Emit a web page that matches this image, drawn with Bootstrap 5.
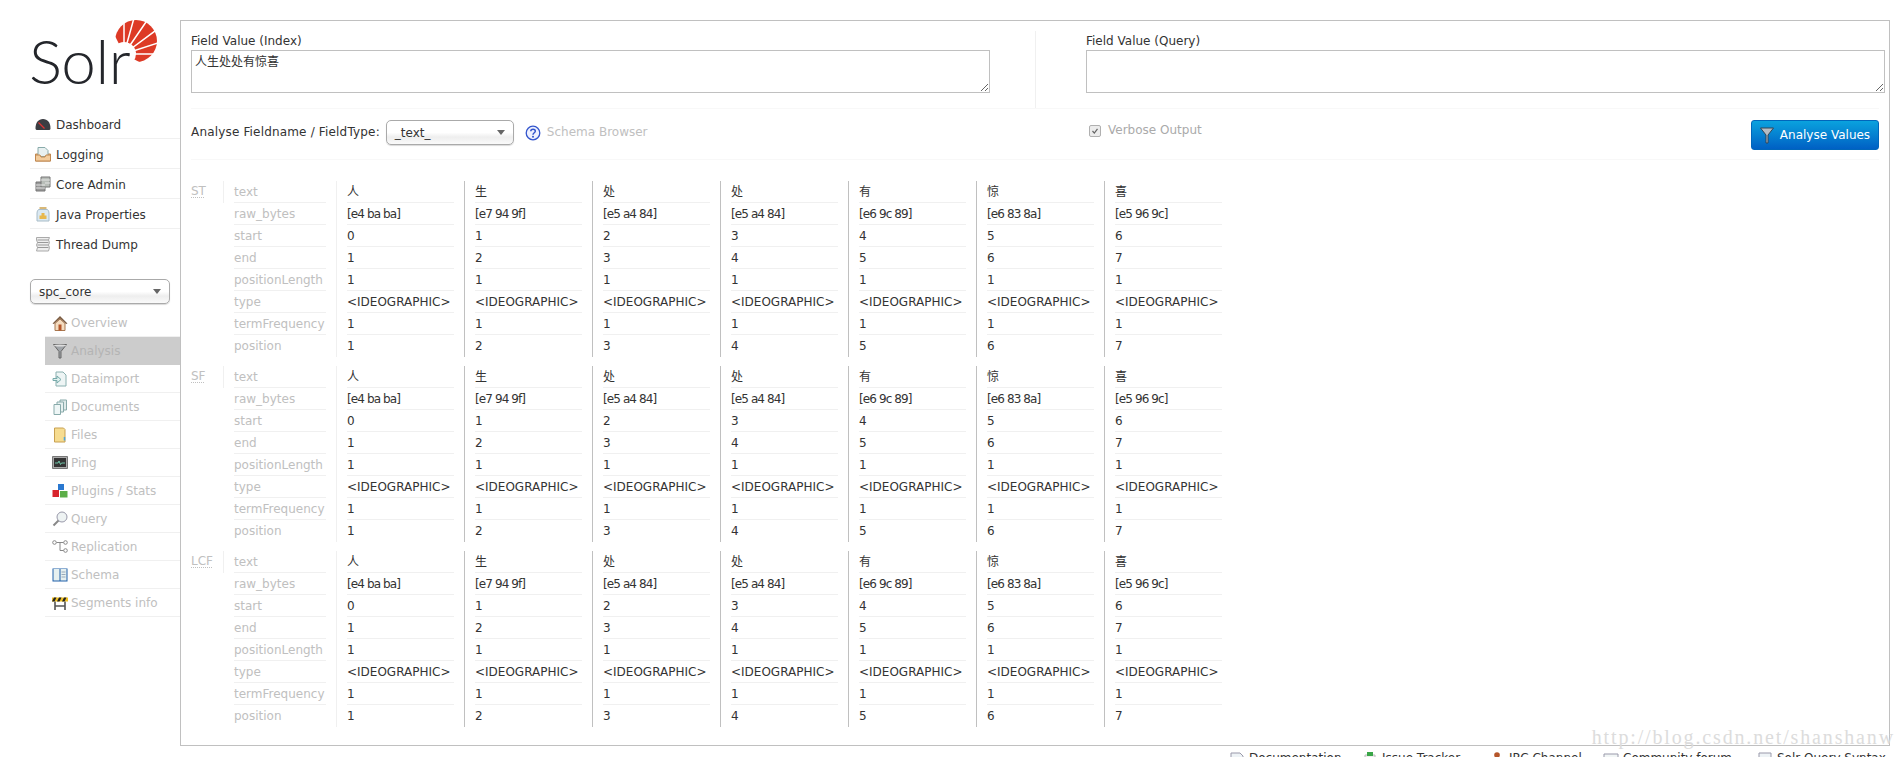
<!DOCTYPE html>
<html lang="en">
<head>
<meta charset="utf-8">
<title>Solr Admin</title>
<link href="https://cdn.jsdelivr.net/npm/bootstrap@5.3.0/dist/css/bootstrap.min.css" rel="stylesheet">
<style>
html,body{height:757px;overflow:hidden;background:#fff}
body{font-family:"DejaVu Sans","Noto Sans CJK SC",sans-serif;font-size:12px;line-height:15px;color:#333}
.sr-shell{width:1898px}
.sr-side{width:180px;flex:none}
.sr-logo{height:109px;position:relative}
.sr-word{font-family:Lato,sans-serif;font-weight:300;font-size:62px;line-height:60px;letter-spacing:-.5px;color:#24262b;position:absolute;left:29px;top:30px}
.sr-sun{position:absolute;left:115px;top:20px}
.sr-nav{margin-left:30px}
.sr-nav a,.sr-core a{display:flex;align-items:center;text-decoration:none;border-bottom:1px solid #f0f0f0}
.sr-nav a{height:30px;color:#333;padding-left:5px;gap:5px}
.sr-nav a span{padding-top:3px}
.sr-nav a:last-child{border-bottom:0}
.sr-nav svg,.sr-core svg{width:16px;height:16px;flex:none}
.sr-pick{display:flex;align-items:center;justify-content:space-between;height:25px;border:1px solid #aaa;border-radius:5px;background:linear-gradient(#fff 50%,#eee 70%,#fafafa);box-shadow:0 1px 1px rgba(0,0,0,.15);color:#333;font-size:12px;padding:0 8px;width:100%}
.sr-pick:hover{background:linear-gradient(#fff 50%,#eee 70%,#fafafa);color:#333;border-color:#aaa}
.sr-caret{width:0;height:0;border:4px solid transparent;border-top:5px solid #666;border-bottom:0}
.sr-pickwrap{margin:20px 10px 5px 30px}
.sr-core{margin-left:45px}
.sr-core a{height:28px;color:#c0c0c0;padding-left:7px;gap:3px}
.sr-core a span{padding-top:1px}
.sr-core a.sr-on{background:#ccc;color:#b4b4b4;border-bottom-color:#ccc}
.sr-main{width:1710px;height:726px;margin-top:20px;border:1px solid #c0c0c0;padding:10px 10px 0;flex:none;position:relative}
.sr-fields{height:78px;border-bottom:1px solid #f8f8f8;width:1688px}
.sr-fcol{width:845px;border-right:1px solid #f0f0f0;flex:none}
.sr-fcol2{padding-left:50px;width:843px;flex:none}
.sr-lab{display:block;height:19px;line-height:17px;margin:0;padding-top:2px;color:#333}
.sr-area.form-control{width:799px;height:43px;border:1px solid #c0c0c0;border-radius:0;padding:4px 2px 0 3px;font-family:"DejaVu Sans","Noto Sans CJK SC",sans-serif;font-size:12px;line-height:15px;color:#333;box-shadow:none;resize:both;min-height:0}
.sr-opts{height:51px;border-bottom:1px solid #f8f8f8;width:1688px;position:relative}
.sr-opt1{width:895px;flex:none;padding-top:11px;gap:6px;align-items:center;height:36px}
.sr-ftype{letter-spacing:.17px}
.sr-sel{width:128px;flex:none;margin-right:5px}
.sr-sel .sr-pick{padding:0 8px}
.sr-muted{color:#c0c0c0}
.sr-verb{display:flex;align-items:center;gap:7px;height:25px;margin-top:9px;margin-left:3px;color:#aaa;width:600px}
.sr-verb .form-check-input{width:12px;height:12px;opacity:1;flex:none;border:1px solid #b0b0b0;border-radius:2px;background-color:#ececec;background-size:10px;background-image:url("data:image/svg+xml,%3csvg xmlns='http://www.w3.org/2000/svg' viewBox='0 0 12 12'%3e%3cpath d='M3 6l2.200 2.500L9 3.500' fill='none' stroke='%23666' stroke-width='1.500'/%3e%3c/svg%3e")}
.sr-go.btn{height:30px;width:128px;margin:11px 0 0;padding:0;display:flex;align-items:center;justify-content:center;gap:6px;font-size:12px;color:#fff;border:1px solid #0066bb;border-radius:3px;background:linear-gradient(#0aa2de,#0060c4);margin-left:auto}
.sr-groups{margin-top:21px}
.sr-grp{display:flex;margin-bottom:9px;height:176px}
.sr-code{width:33px;height:22px;flex:none;border-right:1px solid #f0f0f0;color:#c0c0c0;line-height:21px;position:relative}
.sr-code abbr{text-decoration:underline dotted #c0c0c0;text-underline-offset:2px;cursor:help}
.sr-names{width:112px;padding:0 10px;flex:none;color:#c0c0c0}
.sr-tok{width:128px;padding:0 10px;flex:none;border-left:1px solid #c0c0c0;white-space:nowrap}
.sr-tok.sr-first{border-left-color:#f0f0f0}
.sr-row{height:22px;line-height:23px;border-bottom:1px solid #f0f0f0}
.sr-row:last-child{border-bottom:0}
.sr-raw{letter-spacing:-.9px}
.sr-foot{height:20px;padding:6px 0 0;margin-left:1229px;white-space:nowrap}
.sr-foot a{display:flex;flex:none;gap:4px;color:#333;text-decoration:none;align-items:flex-start}
.sr-foot a:nth-child(1){width:133px}
.sr-foot a:nth-child(2){width:127px}
.sr-foot a:nth-child(3){width:114px}
.sr-foot a:nth-child(4){width:154px}
.sr-foot span{margin-top:-1px}
.sr-foot svg{width:16px;height:16px;flex:none}
.sr-mark{position:absolute;right:-6px;top:706px;font-family:"Liberation Serif",serif;font-size:20px;line-height:20px;letter-spacing:1.85px;color:#dcdcdc;white-space:nowrap}
</style>
</head>
<body class="m-0">
<div class="sr-shell">
<div class="d-flex">
<aside class="sr-side">
  <div class="sr-logo">
    <svg class="sr-sun" width="42" height="42" viewBox="0 0 42 42">
      <defs><clipPath id="sunclip"><path d="M9 34 L-2.500 11 A25 25 0 0 1 45 0 L45 40 L30 45 Z"/></clipPath></defs>
      <circle cx="21" cy="21" r="21" fill="#dd3a26" clip-path="url(#sunclip)"/>
      <circle cx="9" cy="34" r="12" fill="#fff"/>
      <g stroke="#fff" stroke-width="1.500">
        <path d="M9 34 9 -2M9 34 19 -2M9 34 31 2M9 34 44 8M9 34 46 22M9 34 46 34"/>
      </g>
    </svg>
    <span class="sr-word">Solr</span>
  </div>
  <nav class="sr-nav nav flex-column">
    <a href="#"><svg viewBox="0 0 16 16"><path d="M.5 12.500C.5 6.500 3.500 3 8 3s7.500 3.500 7.500 9.500c0 1-1 1.500-2 1.500H2.500c-1 0-2-.5-2-1.500Z" fill="#3b3d42"/><path d="M3.500 6.500 9.500 12.500" stroke="#d33" stroke-width="1.300"/></svg><span>Dashboard</span></a>
    <a href="#"><svg viewBox="0 0 16 16"><path d="M.5 8H15.500V15H.5Z" fill="#f0c088" stroke="#c08850"/><path d="M3 1.500H10L13 4.500V10.500H3Z" fill="#e8f0f0" stroke="#8aa"/><path d="M.5 9H5L6 11H10L11 9H15.500V15H.5Z" fill="#f3cc9c" stroke="#c08850"/></svg><span>Logging</span></a>
    <a href="#"><svg viewBox="0 0 16 16"><path d="M1 6H10V15H1Z" fill="#999" stroke="#777"/><path d="M6 1H15V11H6Z" fill="#b8bdb8" stroke="#777"/><path d="M1 9H10M1 12H10M6 4H15M10 7H15" stroke="#e4e4e4"/></svg><span>Core Admin</span></a>
    <a href="#"><svg viewBox="0 0 16 16"><path d="M4.500 1H11.500V3.500H4.500Z" fill="#d8b878"/><path d="M3.500 3.500H12.500Q14 5 14 7V15H2V7Q2 5 3.500 3.500Z" fill="#dbe9f2" stroke="#a8bcc8"/><path d="M6.500 7H9.500V9.500H11.500V13H4.500V9.500H6.500Z" fill="#e8b84c"/></svg><span>Java Properties</span></a>
    <a href="#"><svg viewBox="0 0 16 16"><path d="M1.500 1.500H14.500L13.500 4 14.500 6.500 13.500 9 14.500 11.500 13.500 15H1.500L2.500 11.500 1.500 9 2.500 6.500 1.500 4Z" fill="#eee" stroke="#aaa"/><path d="M2.500 4H13.500M2.500 6.500H13.500M2.500 9H13.500M2.500 11.500H13.500" stroke="#999"/></svg><span>Thread Dump</span></a>
  </nav>
  <div class="sr-pickwrap"><button type="button" class="btn sr-pick"><span>spc_core</span><i class="sr-caret"></i></button></div>
  <nav class="sr-core nav flex-column">
    <a href="#"><svg viewBox="0 0 16 16"><path d="M8 1 .5 8.500 2 9 8 3.500 14 9 15.500 8.500Z" fill="#7a5a40"/><path d="M3 8.500 8 4 13 8.500V15.500H3Z" fill="#f4dcc0" stroke="#a87850"/><path d="M6.500 9.500H9.500V15.500H6.500Z" fill="#b5562a"/></svg><span>Overview</span></a>
    <a href="#" class="sr-on"><svg viewBox="0 0 16 16"><path d="M1.500 1.500H14.500L9 8.500V15H7V8.500Z" fill="#a0a4a8" stroke="#666"/><ellipse cx="8" cy="2.500" rx="6" ry="1" fill="#ddd"/></svg><span>Analysis</span></a>
    <a href="#"><svg viewBox="0 0 16 16"><path d="M4 1H11L14 4V15H4Z" fill="#eef5f5" stroke="#8ab0b0"/><path d="M1 7.500H5V5L9 8.500 5 12V9.500H1Z" fill="#dff0ee" stroke="#7aa"/></svg><span>Dataimport</span></a>
    <a href="#"><svg viewBox="0 0 16 16"><path d="M8 1H14.500V11H8Z" fill="#dde9e9" stroke="#8aa"/><path d="M5 3H11.500V13H5Z" fill="#e6f0f0" stroke="#8aa"/><path d="M2 5.500H8.500V15.500H2Z" fill="#eef6f6" stroke="#8aa"/></svg><span>Documents</span></a>
    <a href="#"><svg viewBox="0 0 16 16"><path d="M2.500 1H11.500L13 2.500V15H2.500Z" fill="#f6dc90" stroke="#c8a050"/><path d="M12.500 10V13.500" stroke="#4ca6d8" stroke-width="1.500"/></svg><span>Files</span></a>
    <a href="#"><svg viewBox="0 0 16 16"><path d="M.5 1.500H15.500V13.500H.5Z" fill="#aaa" stroke="#777"/><path d="M2 3H14V12H2Z" fill="#333"/><path d="M3 8H6L7 6 8.500 9.500 9.500 8H13" stroke="#6fc4a8" fill="none"/></svg><span>Ping</span></a>
    <a href="#"><svg viewBox="0 0 16 16"><path d="M6 1H12V7H6Z" fill="#2a78d0"/><path d="M.5 7H7V14H.5Z" fill="#d8242c"/><path d="M8 8H15.500V14.500H8Z" fill="#5cae48"/></svg><span>Plugins / Stats</span></a>
    <a href="#"><svg viewBox="0 0 16 16"><circle cx="10" cy="6" r="5" fill="#eef3f3" stroke="#99a"/><path d="M6.500 9.500 1.500 14.500" stroke="#888" stroke-width="2"/></svg><span>Query</span></a>
    <a href="#"><svg viewBox="0 0 16 16" fill="none" stroke="#888"><circle cx="2.500" cy="3.500" r="1.800"/><circle cx="13.500" cy="3.500" r="1.800"/><circle cx="13.500" cy="11.500" r="1.800"/><path d="M4.500 3.500H8V11.500H11.500M8 3.500H11.500"/></svg><span>Replication</span></a>
    <a href="#"><svg viewBox="0 0 16 16"><path d="M.5 1.500H15.500V14.500H.5Z" fill="#1e5fa8"/><path d="M1.500 2H7.500V13.500H1.500ZM8.500 2H14.500V13.500H8.500Z" fill="#e6f0f0"/><path d="M9.500 5H13.500M9.500 7.500H13.500M9.500 10H13.500" stroke="#9ab"/></svg><span>Schema</span></a>
    <a href="#"><svg viewBox="0 0 16 16"><path d="M0 2.500H16V6.500H0Z" fill="#f0c020"/><path d="M2 2.500 0 6.500H2.500L4.500 2.500ZM7 2.500 5 6.500H7.500L9.500 2.500ZM12 2.500 10 6.500H12.500L14.500 2.500Z" fill="#222"/><path d="M3 6.500V15M13 6.500V15M3 11H13" stroke="#555" stroke-width="1.600"/></svg><span>Segments info</span></a>
  </nav>
</aside>
<main class="sr-main">
  <div class="sr-fields d-flex">
    <div class="sr-fcol">
      <label class="sr-lab">Field Value (Index)</label>
      <textarea class="form-control sr-area">人生处处有惊喜</textarea>
    </div>
    <div class="sr-fcol2">
      <label class="sr-lab">Field Value (Query)</label>
      <textarea class="form-control sr-area"></textarea>
    </div>
  </div>
  <div class="sr-opts d-flex">
    <div class="sr-opt1 d-flex">
      <span class="sr-ftype">Analyse Fieldname / FieldType:</span>
      <div class="sr-sel"><button type="button" class="btn sr-pick"><span>_text_</span><i class="sr-caret"></i></button></div>
      <svg width="16" height="16" viewBox="0 0 16 16"><circle cx="8" cy="8" r="6.800" fill="#eef1ff" stroke="#3355cc" stroke-width="1.300"/><path d="M5.800 6.300C5.800 3.700 10.300 3.700 10.300 6.300 10.300 7.800 8 7.800 8 9.800" fill="none" stroke="#3355cc" stroke-width="1.500"/><circle cx="8" cy="11.800" r="1" fill="#3355cc"/></svg>
      <span class="sr-muted">Schema Browser</span>
    </div>
    <div class="sr-verb"><input class="form-check-input m-0" type="checkbox" checked disabled id="verbose"><span>Verbose Output</span></div>
    <button type="button" class="btn sr-go"><svg width="14" height="18" viewBox="0 0 14 18"><path d="M.5 2H13.500L8 9V17H6V9Z" fill="#b5bcc4" stroke="#345"/></svg><span>Analyse Values</span></button>
  </div>
  <div class="sr-groups" id="groups"></div>
  <div class="sr-mark">http://blog.csdn.net/shanshanw</div>
</main>
</div>
<footer class="sr-foot d-flex">
  <a href="#"><svg viewBox="0 0 16 16"><path d="M2 1H11L14 4V15H2Z" fill="#eef3f6" stroke="#99a"/></svg><span>Documentation</span></a>
  <a href="#"><svg viewBox="0 0 16 16"><path d="M3 3H13V15H3Z" fill="#eee" stroke="#bbb"/><path d="M5 0H11V4H5Z" fill="#3aa648"/></svg><span>Issue Tracker</span></a>
  <a href="#"><svg viewBox="0 0 16 16"><circle cx="8" cy="3" r="2.800" fill="#b5562a"/><path d="M3 15 8 5 13 15Z" fill="#e0a070"/></svg><span>IRC Channel</span></a>
  <a href="#"><svg viewBox="0 0 16 16"><path d="M1 2H15V13H1Z" fill="#f2f6f6" stroke="#99a"/></svg><span>Community forum</span></a>
  <a href="#"><svg viewBox="0 0 16 16"><path d="M2 1H14V15H2Z" fill="#eef3f6" stroke="#99a"/></svg><span>Solr Query Syntax</span></a>
</footer>
</div>
<script>
var names=["text","raw_bytes","start","end","positionLength","type","termFrequency","position"];
var toks=[["人","[e4 ba ba]"],["生","[e7 94 9f]"],["处","[e5 a4 84]"],["处","[e5 a4 84]"],["有","[e6 9c 89]"],["惊","[e6 83 8a]"],["喜","[e5 96 9c]"]];
var h="";
["ST","SF","LCF"].forEach(function(c){
  h+='<div class="sr-grp"><div class="sr-code"><abbr>'+c+'</abbr></div><div class="sr-names">';
  names.forEach(function(n){h+='<div class="sr-row">'+n+'</div>'});
  h+='</div>';
  toks.forEach(function(t,i){
    var v=[t[0],t[1],i,i+1,1,"&lt;IDEOGRAPHIC&gt;",1,i+1];
    h+='<div class="sr-tok'+(i?'':' sr-first')+'">';
    v.forEach(function(x,k){h+='<div class="sr-row'+(k==1?' sr-raw':'')+'">'+x+'</div>'});
    h+='</div>';
  });
  h+='</div>';
});
document.getElementById("groups").innerHTML=h;
</script>
<script src="https://cdn.jsdelivr.net/npm/bootstrap@5.3.0/dist/js/bootstrap.bundle.min.js"></script>
</body>
</html>
